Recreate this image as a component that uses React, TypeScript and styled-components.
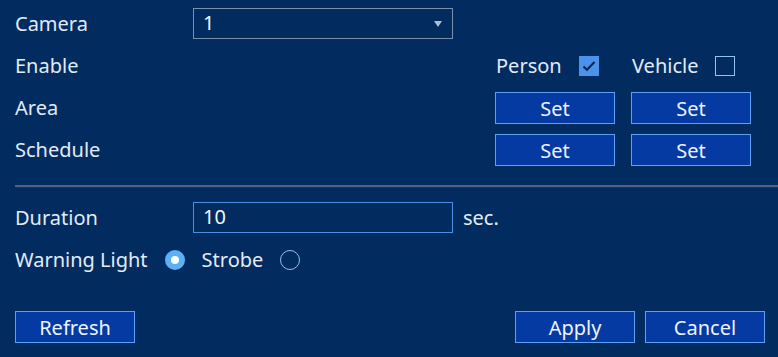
import React from "react";
import styled, { createGlobalStyle } from "styled-components";

const GlobalStyle = createGlobalStyle`
  html, body {
    margin: 0;
    padding: 0;
    background: #022c5f;
  }
  body {
    font-family: "Noto Sans", "DejaVu Sans", sans-serif;
    color: #e2ebf6;
  }
`;

const Page = styled.div`
  width: 778px;
  height: 357px;
  box-sizing: border-box;
  padding: 8px 0 0 15px;
  background: #022c5f;
  display: flex;
  flex-direction: column;
  overflow: hidden;
`;

const Row = styled.div`
  display: grid;
  grid-template-columns: 178px 260px 1fr;
  align-items: center;
  height: 31px;
  margin-bottom: 11px;
`;

const Label = styled.span`
  font-size: 20px;
  line-height: 30px;
  white-space: nowrap;
`;

const Field = styled.div<{ $border: string }>`
  position: relative;
  box-sizing: border-box;
  width: 260px;
  height: 31px;
  border: 1px solid ${(p) => p.$border};
  padding-left: 9px;
  font-size: 20px;
  line-height: 28px;
  color: #f2f6fb;
`;

const Arrow = styled.span`
  position: absolute;
  right: 10px;
  top: 12px;
  width: 0;
  height: 0;
  border-left: 4px solid transparent;
  border-right: 4px solid transparent;
  border-top: 6px solid #aebdd3;
`;

const Unit = styled.span`
  font-size: 20px;
  padding-left: 10px;
`;

const RightGroup = styled.div`
  grid-column: 3;
  display: grid;
  grid-template-columns: 120px 120px;
  column-gap: 16px;
  padding-left: 42px;
  align-items: center;
`;

const CheckItem = styled.label`
  display: flex;
  align-items: center;
  gap: 17px;
  font-size: 20px;
  line-height: 30px;
  padding-left: 1px;
`;

const Box = styled.span<{ $checked?: boolean }>`
  box-sizing: border-box;
  width: 20px;
  height: 20px;
  display: inline-flex;
  align-items: center;
  justify-content: center;
  background: ${(p) => (p.$checked ? "#4b93ea" : "transparent")};
  border: 1px solid ${(p) => (p.$checked ? "#4b93ea" : "#8ec3f2")};
`;

const Button = styled.button`
  box-sizing: border-box;
  width: 120px;
  height: 32px;
  padding: 0;
  background: #053aa3;
  border: 1px solid #5da0f3;
  color: #eef4fb;
  font-family: "Noto Sans", "DejaVu Sans", sans-serif;
  font-size: 20px;
  line-height: 29px;
  cursor: pointer;
`;

const Divider = styled.div`
  height: 2px;
  margin: 9px 0 14px;
  background: #566076;
  border-bottom: 1px solid #1c3358;
`;

const RadioRow = styled.div`
  display: flex;
  align-items: center;
  gap: 17px;
  height: 31px;
  font-size: 20px;
  line-height: 30px;
`;

const Radio = styled.span<{ $on?: boolean }>`
  box-sizing: border-box;
  width: 20px;
  height: 20px;
  border-radius: 50%;
  border: ${(p) => (p.$on ? "6px solid #5eb0f4" : "1px solid #8ec3f2")};
  background: ${(p) => (p.$on ? "#ffffff" : "transparent")};
`;

const Footer = styled.div`
  display: flex;
  align-items: center;
  gap: 10px;
  margin-top: 36px;
  padding-right: 13px;
`;

const Spacer = styled.div`
  flex: 1;
`;

function Check() {
  return (
    <svg width="14" height="12" viewBox="0 0 14 12">
      <path d="M1.5 6.5 L5 9.8 L12.5 2" fill="none" stroke="#0b2456" strokeWidth="2.2" />
    </svg>
  );
}

export default function App() {
  return (
    <>
      <GlobalStyle />
      <Page>
        <Row>
          <Label>Camera</Label>
          <Field $border="#7d90ab">
            1
            <Arrow />
          </Field>
        </Row>
        <Row>
          <Label>Enable</Label>
          <span />
          <RightGroup>
            <CheckItem>
              Person
              <Box $checked>
                <Check />
              </Box>
            </CheckItem>
            <CheckItem>
              Vehicle
              <Box />
            </CheckItem>
          </RightGroup>
        </Row>
        <Row>
          <Label>Area</Label>
          <span />
          <RightGroup>
            <Button>Set</Button>
            <Button>Set</Button>
          </RightGroup>
        </Row>
        <Row>
          <Label>Schedule</Label>
          <span />
          <RightGroup>
            <Button>Set</Button>
            <Button>Set</Button>
          </RightGroup>
        </Row>
        <Divider />
        <Row>
          <Label>Duration</Label>
          <Field $border="#4a8fe2">10</Field>
          <Unit>sec.</Unit>
        </Row>
        <RadioRow>
          <span>Warning Light</span>
          <Radio $on />
          <span>Strobe</span>
          <Radio />
        </RadioRow>
        <Footer>
          <Button>Refresh</Button>
          <Spacer />
          <Button>Apply</Button>
          <Button>Cancel</Button>
        </Footer>
      </Page>
    </>
  );
}
